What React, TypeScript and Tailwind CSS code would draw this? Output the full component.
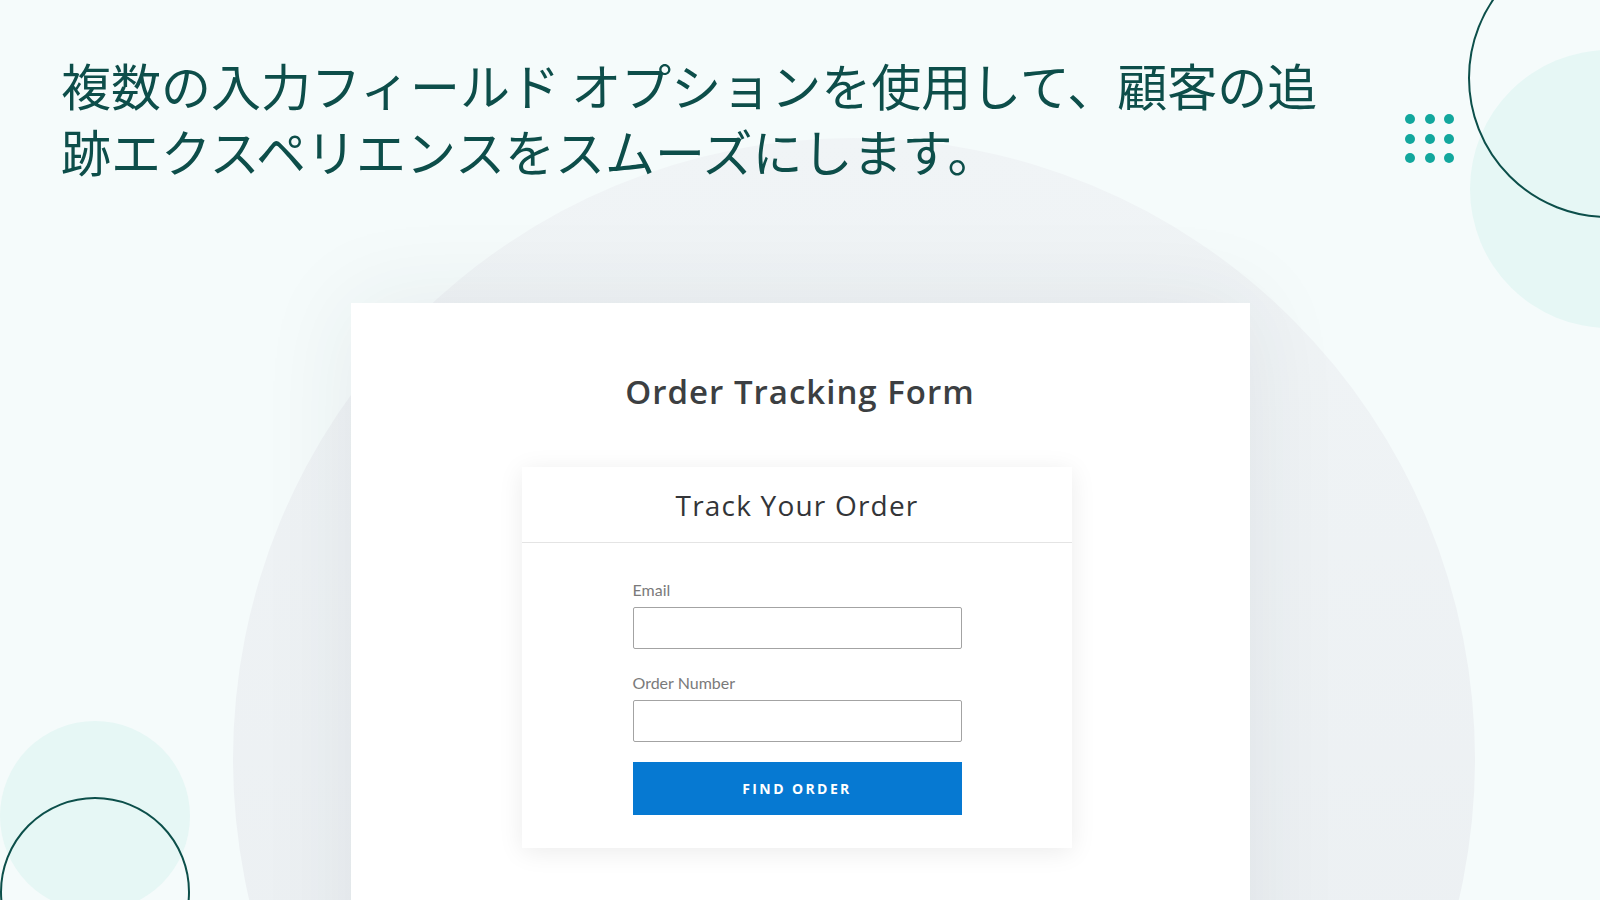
import React from "react";

const dots = Array.from({ length: 9 });

function Field({ label }: { label: string }) {
  return (
    <div className="flex flex-col">
      <label className="text-[16px] leading-[20px] text-[#7a7a7a] font-['Lato',sans-serif]">{label}</label>
      <input
        type="text"
        className="mt-[7px] h-[42px] w-full rounded-[2px] border border-[#a3a3a3] bg-white px-3 outline-none"
      />
    </div>
  );
}

export default function App() {
  return (
    <div className="relative h-[900px] w-[1600px] overflow-hidden bg-[#f5fbfb] font-['Noto_Sans',sans-serif]">
      {/* background decoration */}
      <div className="absolute left-[233px] top-[138px] h-[1242px] w-[1242px] rounded-full bg-gradient-to-b from-[#f0f4f6] to-[#eaeef1]" />
      <div className="absolute left-[1470px] top-[50px] h-[278px] w-[278px] rounded-full bg-[#e6f7f5]" />
      <div className="absolute left-[1468px] top-[-62px] h-[280px] w-[280px] rounded-full border-2 border-[#0c4f4a]" />
      <div className="absolute left-[0px] top-[721px] h-[190px] w-[190px] rounded-full bg-[#e6f7f5]" />
      <div className="absolute left-[0px] top-[797px] h-[190px] w-[190px] rounded-full border-2 border-[#0c4f4a]" />
      <div className="absolute left-[1405px] top-[114px] grid grid-cols-3 gap-x-[9.5px] gap-y-[9.5px]">
        {dots.map((_, i) => (
          <span key={i} className="h-[10px] w-[10px] rounded-full bg-[#12a79d]" />
        ))}
      </div>

      <div className="relative z-10 flex flex-col">
        <h1 className="w-[1345px] pl-[61px] pt-[51px] text-[50px] font-normal leading-[66px] text-[#0d4e4a] font-['Noto_Sans_CJK_JP',sans-serif]">
          複数の入力フィールド オプションを使用して、顧客の追跡エクスペリエンスをスムーズにします。
        </h1>

        <div className="mx-auto mt-[120px] h-[700px] w-[899px] bg-white shadow-[0_0_90px_rgba(40,50,60,0.08)]">
          <h2 className="pt-[69px] text-center text-[33px] font-semibold leading-[40px] tracking-[1px] text-[#3c3f42] font-['Open_Sans',sans-serif]">
            Order Tracking Form
          </h2>

          <div className="mx-auto mt-[55px] w-[550px] -translate-x-[3px] bg-white shadow-[0_4px_24px_rgba(0,0,0,0.08)]">
            <div className="flex h-[76px] items-center justify-center border-b border-[#e4e4e4]">
              <span className="text-[28px] tracking-[1.2px] text-[#333538] font-['Open_Sans',sans-serif]">Track Your Order</span>
            </div>
            <div className="mx-auto flex w-[329px] flex-col pb-[33px] pt-[37px]">
              <Field label="Email" />
              <div className="mt-[24px]">
                <Field label="Order Number" />
              </div>
              <button className="mt-[20px] h-[53px] w-full bg-[#0679d2] text-[14px] font-bold uppercase tracking-[2.4px] text-white font-['Open_Sans',sans-serif]">
                Find Order
              </button>
            </div>
          </div>
        </div>
      </div>
    </div>
  );
}
